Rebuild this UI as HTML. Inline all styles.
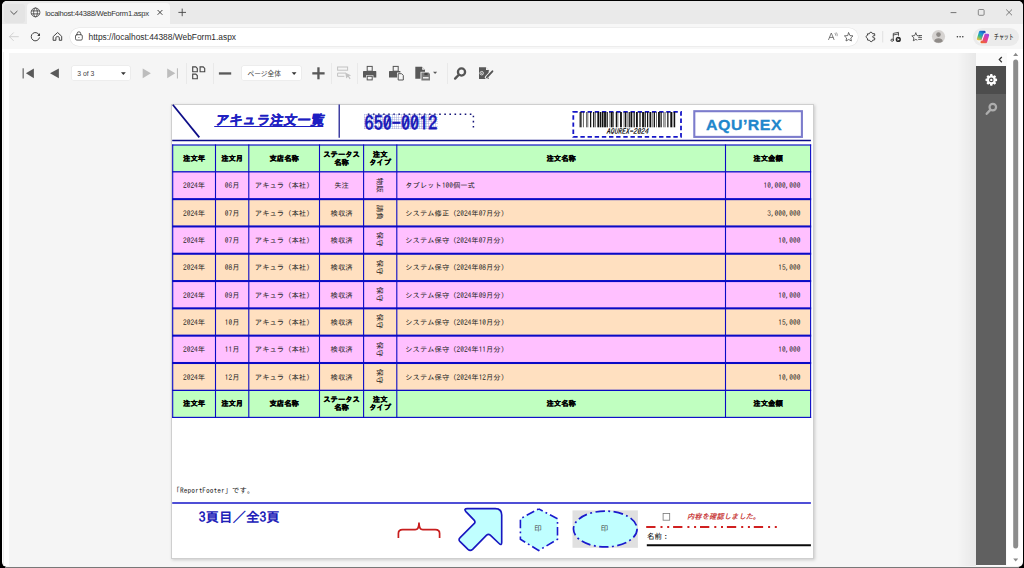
<!DOCTYPE html>
<html lang="ja"><head><meta charset="utf-8"><title>localhost:44388/WebForm1.aspx</title>
<style>
*{box-sizing:border-box}
html,body{margin:0;padding:0}
body{width:1024px;height:568px;overflow:hidden;background:#000;position:relative;font-family:"Liberation Sans","Noto Sans CJK JP",sans-serif;color:#222}
#win{position:absolute;left:2px;top:1px;width:1020.6px;height:566px;border-radius:5px;overflow:hidden;background:#fff}
#c{position:absolute;left:-2px;top:-1px;width:1024px;height:568px}
.a{position:absolute}
svg{position:absolute;overflow:visible}
#tabbar{left:0;top:0;width:1024px;height:24.4px;background:#eaeaea}
#tab{left:26.5px;top:3.3px;width:143.8px;height:21.4px;background:#f7f7f7;border-radius:4px 4px 0 0}
#tbar{left:0;top:24.4px;width:1024px;height:24.9px;background:#f7f7f7}
#addr{left:69.6px;top:27.5px;width:788.2px;height:18.4px;background:#fff;border-radius:9px;box-shadow:0 0 0 .5px #e4e4e4}
.t{white-space:nowrap;line-height:1}
#viewer{left:9px;top:53px;width:998.3px;height:512.5px;background:#f5f5f5}
.sel{background:#fff;border-radius:1.5px;box-shadow:0 0 0 .6px #e6e6e6;height:14px;top:65.8px}
.sep{width:1px;background:#e9e9e9;top:63px;height:21px}
#page{left:170.6px;top:103.9px;width:643px;height:455.2px;background:#fff;border:1px solid #cfcfcf;box-shadow:1px 1px 3px rgba(0,0,0,.18)}
.rp{font-family:"IPAGothic","Noto Sans CJK JP",monospace}
.cell{position:absolute;display:flex;align-items:center;justify-content:center;font-size:7.35px;line-height:7.4px;white-space:nowrap;color:#222}
.hc{font-weight:bold;color:#000;text-align:center;-webkit-text-stroke:.2px #000;line-height:8.1px}
.dc>span:not(.vt){position:relative;top:.7px}
.hc>span{position:relative;top:.5px}
.dc.l1{justify-content:flex-start;padding-left:6px}
.dc.l2{justify-content:flex-start;padding-left:8.4px}
.dc.r{justify-content:flex-end;padding-right:10.3px}
.vt{display:inline-block;transform:translate(-.9px,-.4px) rotate(90deg);font-size:7.6px;color:#1a1a1a}
</style></head>
<body>
<div id="win"><div id="c">

<!-- ======= browser tab strip ======= -->
<div id="tabbar" class="a"></div>
<div class="a" style="left:3.5px;top:4px;width:21px;height:18.5px;background:#e4e4e4;border-radius:3px"></div>
<svg style="left:0;top:0" width="1024" height="50" viewBox="0 0 1024 50">
  <path d="M10.4 11 L13.9 14.4 L17.4 11" fill="none" stroke="#444" stroke-width="0.9"/>
</svg>
<div id="tab" class="a"></div>
<svg style="left:0;top:0" width="1024" height="50" viewBox="0 0 1024 50" fill="none" stroke="#3a3a3a" stroke-width="0.8">
  <circle cx="35.5" cy="12.4" r="4.4"/>
  <ellipse cx="35.5" cy="12.4" rx="1.9" ry="4.4"/>
  <path d="M31.4 10.9H39.6M31.4 13.9H39.6"/>
  <path d="M157.6 10 L162.4 14.8M162.4 10 L157.6 14.8" stroke="#333" stroke-width="0.9"/>
  <path d="M178.4 12.4H186M182.2 8.6V16.2" stroke="#444" stroke-width="0.9"/>
  <!-- window controls -->
  <path d="M950.6 12.6H956.4" stroke="#555" stroke-width="0.8"/>
  <rect x="978.3" y="9.5" width="5.8" height="5.8" rx="1" stroke="#666" stroke-width="0.75"/>
  <path d="M1006.2 9.5L1012 15.3M1012 9.5L1006.2 15.3" stroke="#555" stroke-width="0.75"/>
</svg>
<div class="a t" id="tabtitle" style="left:45.2px;top:9.6px;font-size:7.6px;letter-spacing:-.25px;color:#333">localhost:44388/WebForm1.aspx</div>

<!-- ======= browser toolbar ======= -->
<div id="tbar" class="a"></div>
<div id="addr" class="a"></div>
<svg style="left:0;top:0" width="1024" height="50" viewBox="0 0 1024 50" fill="none" stroke="#444" stroke-width="0.85" stroke-linecap="round" stroke-linejoin="round">
  <!-- back (disabled) -->
  <path d="M9.6 36.7H18.4M13.4 32.8L9.5 36.7L13.4 40.6" stroke="#cdcdcd" stroke-width=".9"/>
  <!-- refresh -->
  <path d="M39.5 35.6A4.2 4.2 0 1 0 39.5 37.8" stroke="#3c3c3c" stroke-width=".95"/><path d="M40 33.1V35.9H37.2Z" fill="#3c3c3c" stroke="none"/>
  <!-- home -->
  <path d="M53.5 36.3L57.6 32.5L61.7 36.3V40.3H59.3V37.7Q59.3 36.6 57.6 36.6Q55.9 36.6 55.9 37.7V40.3H53.5Z" stroke="#3c3c3c" stroke-width=".95"/>
  <!-- lock -->
  <rect x="75.5" y="34.7" width="6.8" height="5.4" rx="1.3" stroke="#444" stroke-width=".85"/><path d="M77.1 34.7V33.6A1.8 1.8 0 0 1 80.7 33.6V34.7" stroke="#444" stroke-width=".85"/><rect x="78.4" y="37" width="1" height=".8" fill="#444" stroke="none"/>
  <!-- read aloud A -->
  <path d="M828.6 39.6L831.3 33L834 39.6M829.5 37.4H833.1" stroke="#666"/><path d="M835 33.2q1 .6 .6 2M836.4 32.6q1.4 1.2 .8 3.2" stroke="#666" stroke-width=".6"/>
  <!-- star -->
  <path d="M848.7 32.8L850 35.6L853 35.9L850.8 38L851.4 41L848.7 39.5L846 41L846.6 38L844.4 35.9L847.4 35.6Z" stroke="#555"/>
  <!-- extension -->
  <path d="M867.6 33.9L869.3 33.8Q869.6 32.2 870.9 32.2Q872.2 32.2 872.5 33.7L874.6 33.7L874.8 35.6Q872.6 35.6 872.6 36.8Q872.6 38 874.8 38L874.6 39.9L872.7 40.2Q872.4 41.7 871.2 41.7Q870 41.7 869.6 40.3L867.6 40.1L867.4 38.3Q866.1 37.8 866.1 36.7Q866.1 35.6 867.4 35.2Z" stroke="#3c3c3c" stroke-width=".95"/>
  <path d="M882.7 31.5V42" stroke="#dcdcdc"/>
  <!-- music -->
  <path d="M893.3 39.8V33.4L898.5 32.3V35.4M893.3 35L898.5 33.9" stroke="#3c3c3c" stroke-width=".85"/><ellipse cx="892.2" cy="40.2" rx="1.3" ry="1.1" stroke="#3c3c3c" stroke-width=".85"/><circle cx="898.3" cy="39.4" r="2.6" fill="#2c2c2c" stroke="none"/><path d="M897.5 38.1L899.7 39.4L897.5 40.7Z" fill="#f7f7f7" stroke="none"/>
  <!-- favourites -->
  <path d="M915.8 33L917 35.6L919.8 35.9M915.8 33L914.6 35.6L911.8 35.9L913.9 37.9L913.3 40.8L915.8 39.4L917 40"/><path d="M918.6 37.4H921.6M918.6 39.4H921.6M919.4 35.5H921.6"/>
  <!-- avatar -->
  <circle cx="938.5" cy="36.6" r="6.6" fill="#d6d3d1" stroke="none"/><circle cx="938.5" cy="34.6" r="2.3" fill="#8f8b88" stroke="none"/><path d="M934.2 41.2A4.4 3.6 0 0 1 942.8 41.2A6.4 6.4 0 0 1 934.2 41.2Z" fill="#8f8b88" stroke="none"/>
  <!-- dots -->
  <g fill="#333" stroke="none"><circle cx="957.4" cy="36.7" r=".78"/><circle cx="960.1" cy="36.7" r=".78"/><circle cx="962.8" cy="36.7" r=".78"/></g>
</svg>
<div class="a t" id="url" style="left:88.6px;top:32.9px;font-size:8.4px;color:#2c2c2c">https<span>:</span>//localhost:44388/WebForm1.aspx</div>
<div class="a" style="left:973px;top:28px;width:46.4px;height:17.6px;border-radius:9px;background:#ebebeb"></div>
<svg style="left:976px;top:29.8px" width="14" height="14" viewBox="0 0 14 14">
  <defs><linearGradient id="cg1" x1=".7" y1="0" x2=".2" y2="1"><stop offset="0" stop-color="#1b4fb6"/><stop offset=".3" stop-color="#1f8fdc"/><stop offset=".62" stop-color="#35ba88"/><stop offset="1" stop-color="#f2c13a"/></linearGradient>
  <linearGradient id="cg2" x1=".8" y1="0" x2=".2" y2="1"><stop offset="0" stop-color="#9a48e0"/><stop offset=".45" stop-color="#e23aa0"/><stop offset="1" stop-color="#ee6a26"/></linearGradient></defs>
  <circle cx="7" cy="7" r="6.9" fill="#fff" opacity=".55"/>
  <path d="M4.3 .8H8.6Q10 .8 9.5 2.3L7 9.2Q6.6 10.2 5.4 10.2H2Q.5 10.2 .9 8.6L2.9 2Q3.3 .8 4.3 .8Z" fill="url(#cg1)"/>
  <path d="M9.8 13.2H5.5Q4.1 13.2 4.6 11.7L7.1 4.8Q7.5 3.8 8.7 3.8H12Q13.5 3.8 13.1 5.4L11.2 12Q10.8 13.2 9.8 13.2Z" fill="url(#cg2)"/>
  <path d="M8.3 3.6L5.9 10.4" stroke="#fff" stroke-width="1.1" stroke-linecap="round" fill="none"/>
</svg>
<div class="a t" id="chat" style="left:994.1px;top:33px;font-size:7.3px;color:#222;-webkit-text-stroke:.1px #222;transform-origin:0 50%;transform:scaleX(.68)">チャット</div>

<!-- ======= page content ======= -->
<div id="viewer" class="a"></div>

<div class="a" style="left:3.2px;top:52px;width:.9px;height:514px;background:#efefef"></div>
<!-- viewer toolbar -->
<svg style="left:0;top:0" width="1024" height="100" viewBox="0 0 1024 100" fill="#595959">
  <rect x="22.6" y="68.3" width="1.1" height="10.2"/><path d="M33.9 68.5V78.2L25.9 73.35Z"/>
  <path d="M58.9 68.5V78.2L50 73.35Z"/>
  <g fill="#bdbdbd"><path d="M142.7 68.5V78.2L150.9 73.35Z"/><path d="M167.2 68.5V78.2L175.3 73.35Z"/><rect x="176.9" y="68.3" width="1.1" height="10.2"/></g>
  <g fill="none" stroke="#484848" stroke-width="1.15">
    <path d="M192.7 66.9H195.8L197.3 68.4V71.7H192.7Z"/><path d="M200.1 66.9H203.2L204.7 68.4V71.7H200.1Z"/><path d="M192.7 74.1H195.8L197.3 75.6V78.7H192.7Z"/>
  </g>
  <rect x="218.9" y="72.3" width="12.3" height="2.3"/>
  <rect x="312.3" y="72.2" width="12.3" height="2.3"/><rect x="317.3" y="67.3" width="2.3" height="12"/>
  <!-- select icon (disabled) -->
  <g fill="none" stroke="#c2c2c2" stroke-width="1"><rect x="337.6" y="67" width="10" height="3.2"/><path d="M345.6 73.1H337.6V76.3H344.4"/></g>
  <path d="M345.2 72.6L351.2 75.4L348.9 76.1L350.6 78.6L349.6 79.2L348 76.8L346.2 78.4Z" fill="#c2c2c2"/>
  <!-- printer -->
  <g>
   <rect x="367.2" y="66.4" width="5" height="4.8" fill="none" stroke="#555" stroke-width="1"/>
   <path d="M363 71.6Q363 71 363.8 71H375.6Q376.3 71 376.3 71.6V77.6H373.4V75.2H366V77.6H363Z"/>
   <rect x="367.2" y="76.3" width="5" height="3.6" fill="none" stroke="#555" stroke-width="1"/>
  </g>
  <!-- print 2 -->
  <g>
   <rect x="393.2" y="66.4" width="5" height="4.8" fill="none" stroke="#555" stroke-width="1"/>
   <path d="M389 71.6Q389 71 389.8 71H400.4V72.6H397V77.6H389Z"/>
   <path d="M398.2 73.7H401.6L403.3 75.4V80H398.2Z" fill="none" stroke="#555" stroke-width="1"/>
  </g>
  <!-- export -->
  <g>
   <path d="M415.3 66.8H422L425 69.8V78.8H415.3Z"/>
   <path d="M422.2 66.9V69.7H425Z" fill="#f5f5f5"/>
   <rect x="420.5" y="71.8" width="10.2" height="9.6" fill="#f5f5f5"/>
   <path d="M421.4 72.6H428.6L430 74V80.6H421.4Z" fill="#7a7a7a"/>
   <rect x="424.4" y="72.9" width="3.2" height="2.3" fill="#444"/>
   <rect x="423" y="77.1" width="5.6" height="1.4" fill="#f5f5f5"/>
   <path d="M433 71.8H437.2L435.1 73.9Z"/>
  </g>
  <!-- search -->
  <g fill="none" stroke="#555"><circle cx="461.5" cy="72" r="3.6" stroke-width="2.3"/><path d="M458.6 75L455.1 78.6" stroke-width="2.4" stroke-linecap="round"/></g>
  <!-- last -->
  <g>
   <path d="M479 67.3H485.8L488.7 70.2V79H479Z"/>
   <path d="M486 67.4V70.1H488.7Z" fill="#f5f5f5"/>
   <circle cx="481.7" cy="73.2" r="1.75" fill="none" stroke="#f5f5f5" stroke-width=".8"/>
   <path d="M481.2 72.4L482.6 73.2L481.2 74Z" fill="#f5f5f5"/>
   <path d="M492.6 70.8L486.4 77.4" stroke="#f5f5f5" stroke-width="3.3" fill="none" stroke-linecap="round"/>
   <path d="M492.4 71.3L487.5 76.5" stroke="#555" stroke-width="1.9" fill="none" stroke-linecap="round"/>
   <path d="M486.3 76.3L487.8 77.7L485.7 78.5Z"/>
  </g>
  <!-- dropdown arrows -->
  <path d="M121 72.2H125.8L123.4 74.9Z" fill="#333"/><path d="M291.7 72.2H296.5L294.1 74.9Z" fill="#333"/>
</svg>
<div class="a sel" style="left:71.8px;width:58.2px"></div>
<div class="a sel" style="left:241.7px;width:59.4px"></div>
<div class="a sep" style="left:186.3px"></div><div class="a sep" style="left:212.8px"></div><div class="a sep" style="left:331.2px"></div><div class="a sep" style="left:356.5px"></div><div class="a sep" style="left:447.2px"></div>
<div class="a t" id="pg" style="left:77.3px;top:70.9px;font-size:6.8px;color:#444">3 of 3</div>
<div class="a t" id="zm" style="left:247.6px;top:70.6px;font-size:6.7px;color:#444">ページ全体</div>
<svg style="left:0;top:0" width="1024" height="100" viewBox="0 0 1024 100"><path d="M121 72.2H125.8L123.4 74.9Z" fill="#333"/><path d="M291.7 72.2H296.5L294.1 74.9Z" fill="#333"/></svg>

<!-- side panel -->
<div class="a" style="left:957px;top:53px;width:19px;height:512.5px;background:linear-gradient(90deg,rgba(0,0,0,0),rgba(0,0,0,.055))"></div>
<div class="a" style="left:975.6px;top:53px;width:31.7px;height:512.5px;background:#fafafa"></div>
<div class="a" style="left:976.3px;top:65.9px;width:30.2px;height:499.6px;background:#606060"></div>
<div class="a" style="left:976.3px;top:65.9px;width:30.2px;height:27.9px;background:#4d4d4d"></div>
<svg style="left:0;top:0" width="1024" height="568" viewBox="0 0 1024 568">
  <path d="M1001.8 57L999.3 59.6L1001.8 62.2" fill="none" stroke="#333" stroke-width="1.25"/>
  <!-- gear -->
  <g transform="translate(991.3 79.9)">
    <g fill="#fff"><circle r="4.4"/>
    <g id="teeth"><rect x="-1.3" y="-5.8" width="2.6" height="11.6" rx=".8"/><rect x="-1.3" y="-5.8" width="2.6" height="11.6" rx=".8" transform="rotate(45)"/><rect x="-1.3" y="-5.8" width="2.6" height="11.6" rx=".8" transform="rotate(90)"/><rect x="-1.3" y="-5.8" width="2.6" height="11.6" rx=".8" transform="rotate(135)"/></g></g>
    <circle r="1.75" fill="none" stroke="#4d4d4d" stroke-width="1.15"/>
  </g>
  <g fill="none" stroke="#adadad"><circle cx="992.8" cy="107.1" r="3.3" stroke-width="2.2"/><path d="M990.3 109.9L986.7 113.8" stroke-width="2.4" stroke-linecap="round"/></g>
  <!-- scrollbar -->
  <path d="M1013.2 56L1015.7 52.8L1018.2 56Z" fill="#8a8a8a"/>
  <rect x="1013.2" y="59.4" width="5" height="489.2" rx="2.5" fill="#8c8c8c"/>
  <path d="M1013.2 558.4L1015.7 561.6L1018.2 558.4Z" fill="#8a8a8a"/>
</svg>

<!-- ======= report page ======= -->
<div id="page" class="a"></div>
<div class="rp">
<svg style="left:0;top:0" width="1024" height="568" viewBox="0 0 1024 568">
  <path d="M172.8 104.8L199.3 137.4" stroke="#0e0e88" stroke-width="1.75" fill="none"/>
  <path d="M339.2 104.6V137.8" stroke="#10108c" stroke-width="1.2" fill="none"/>
  <path d="M172.2 140.5H810.9" stroke="#0c0c88" stroke-width="1.35" fill="none"/>
  <path d="M172.2 503H810.9" stroke="#1414c8" stroke-width="1.6" fill="none"/>
  <!-- dotted box postal -->
  <path d="M367.8 114.2H473.4V129.4" stroke="#141478" stroke-width="1.5" stroke-dasharray="1.6 3.5" fill="none"/>
  <!-- barcode -->
  <rect x="573.3" y="111.9" width="107.7" height="24.9" fill="none" stroke="#1616c8" stroke-width="1.8" stroke-dasharray="4.4 2.75"/>
  <g fill="#111"><rect x="579.60" y="112" width="1.23" height="15.3"/><rect x="581.44" y="112" width="0.61" height="15.3"/><rect x="583.28" y="112" width="0.61" height="15.3"/><rect x="586.34" y="112" width="0.61" height="15.3"/><rect x="587.57" y="112" width="0.61" height="15.3"/><rect x="590.02" y="112" width="1.23" height="15.3"/><rect x="593.08" y="112" width="1.23" height="15.3"/><rect x="594.92" y="112" width="0.61" height="15.3"/><rect x="597.37" y="112" width="1.84" height="15.3"/><rect x="599.82" y="112" width="1.23" height="15.3"/><rect x="601.66" y="112" width="1.84" height="15.3"/><rect x="604.11" y="112" width="1.84" height="15.3"/><rect x="606.56" y="112" width="1.23" height="15.3"/><rect x="609.63" y="112" width="0.61" height="15.3"/><rect x="610.85" y="112" width="1.84" height="15.3"/><rect x="613.31" y="112" width="0.61" height="15.3"/><rect x="615.76" y="112" width="1.23" height="15.3"/><rect x="617.59" y="112" width="0.61" height="15.3"/><rect x="620.05" y="112" width="1.84" height="15.3"/><rect x="623.72" y="112" width="0.61" height="15.3"/><rect x="624.95" y="112" width="1.23" height="15.3"/><rect x="626.79" y="112" width="0.61" height="15.3"/><rect x="628.63" y="112" width="1.23" height="15.3"/><rect x="630.46" y="112" width="1.84" height="15.3"/><rect x="633.53" y="112" width="1.23" height="15.3"/><rect x="635.98" y="112" width="1.84" height="15.3"/><rect x="639.04" y="112" width="0.61" height="15.3"/><rect x="640.27" y="112" width="0.61" height="15.3"/><rect x="642.11" y="112" width="1.84" height="15.3"/><rect x="644.56" y="112" width="1.23" height="15.3"/><rect x="647.01" y="112" width="1.23" height="15.3"/><rect x="649.46" y="112" width="1.84" height="15.3"/><rect x="652.53" y="112" width="0.61" height="15.3"/><rect x="653.75" y="112" width="1.23" height="15.3"/><rect x="656.20" y="112" width="0.61" height="15.3"/><rect x="658.04" y="112" width="1.84" height="15.3"/><rect x="660.49" y="112" width="1.23" height="15.3"/><rect x="663.56" y="112" width="0.61" height="15.3"/><rect x="664.78" y="112" width="0.61" height="15.3"/><rect x="667.23" y="112" width="1.23" height="15.3"/><rect x="670.30" y="112" width="1.84" height="15.3"/><rect x="672.75" y="112" width="0.61" height="15.3"/><rect x="673.97" y="112" width="1.23" height="15.3"/></g>
  <!-- logo -->
  <rect x="694.3" y="111.2" width="107.6" height="25.7" fill="#fff" stroke="#7c7ccc" stroke-width="2.1"/>
</svg>
<div class="a t" id="title" style="left:213.9px;top:113.9px;font-size:13.65px;font-weight:bold;color:#1e1ec2;-webkit-text-stroke:.25px #1e1ec2;text-decoration:underline;text-underline-offset:1.3px;text-decoration-thickness:1px;transform-origin:0 100%;transform:skewX(-11deg)">アキュラ注文一覧</div>
<div class="a t" id="zip" style="left:364.4px;top:113.6px;width:73.4px;height:15.3px;background:repeating-linear-gradient(90deg,rgba(110,120,200,.3) 0 1px,rgba(255,255,255,0) 1px 2.3px),repeating-linear-gradient(0deg,rgba(110,120,200,.28) 0 1px,rgba(255,255,255,0) 1px 2.3px)"><span id="zipt" style="position:absolute;left:0.2px;top:-0.1px;display:block;font-family:'IPAGothic','Liberation Mono',monospace;font-size:18.2px;font-weight:normal;color:#1818b8;-webkit-text-stroke:.7px #1818b8;line-height:16px;height:16px;transform-origin:0 0;transform:scale(1,1.05)">650-0012</span></div>
<div class="a t" id="bct" style="left:606.3px;top:128.4px;font-size:7.6px;font-style:italic;color:#000;-webkit-text-stroke:.12px #000">AQUREX-2024</div>
<div class="a t" id="logo" style="left:706.2px;top:116.5px;font-family:'Liberation Sans',sans-serif;font-weight:bold;font-size:15.3px;color:#2086cc;letter-spacing:.5px;-webkit-text-stroke:.3px #2086cc;transform-origin:0 50%;transform:scaleX(1.04)">AQU’REX</div>

<svg style="left:0;top:0" width="1024" height="568" viewBox="0 0 1024 568"><rect x="172.7" y="145.0" width="637.9" height="26.80" fill="#c0ffc0"/><rect x="172.7" y="171.8" width="637.9" height="27.35" fill="#ffc0ff"/><rect x="172.7" y="199.15" width="637.9" height="27.30" fill="#ffe0c0"/><rect x="172.7" y="226.45" width="637.9" height="27.30" fill="#ffc0ff"/><rect x="172.7" y="253.75" width="637.9" height="27.30" fill="#ffe0c0"/><rect x="172.7" y="281.05" width="637.9" height="27.30" fill="#ffc0ff"/><rect x="172.7" y="308.35" width="637.9" height="27.30" fill="#ffe0c0"/><rect x="172.7" y="335.65" width="637.9" height="27.35" fill="#ffc0ff"/><rect x="172.7" y="363.0" width="637.9" height="27.35" fill="#ffe0c0"/><rect x="172.7" y="390.35" width="637.9" height="27.05" fill="#c0ffc0"/><rect x="172.15" y="144.43" width="639.00" height="1.15" fill="#0a0ac6"/><rect x="172.15" y="171.15" width="639.00" height="1.3" fill="#0a0ac6"/><rect x="172.15" y="198.12" width="639.00" height="2.05" fill="#0a0ac6"/><rect x="172.15" y="225.42" width="639.00" height="2.05" fill="#0a0ac6"/><rect x="172.15" y="252.72" width="639.00" height="2.05" fill="#0a0ac6"/><rect x="172.15" y="280.03" width="639.00" height="2.05" fill="#0a0ac6"/><rect x="172.15" y="307.33" width="639.00" height="2.05" fill="#0a0ac6"/><rect x="172.15" y="334.62" width="639.00" height="2.05" fill="#0a0ac6"/><rect x="172.15" y="361.98" width="639.00" height="2.05" fill="#0a0ac6"/><rect x="172.15" y="389.70" width="639.00" height="1.3" fill="#0a0ac6"/><rect x="172.15" y="416.82" width="639.00" height="1.15" fill="#0a0ac6"/><rect x="172.15" y="144.45" width="1.1" height="273.50" fill="#0a0ac6"/><rect x="214.95" y="144.45" width="1.1" height="273.50" fill="#0a0ac6"/><rect x="248.25" y="144.45" width="1.1" height="273.50" fill="#0a0ac6"/><rect x="318.95" y="144.45" width="1.1" height="273.50" fill="#0a0ac6"/><rect x="363.05" y="144.45" width="1.1" height="273.50" fill="#0a0ac6"/><rect x="396.25" y="144.45" width="1.1" height="273.50" fill="#0a0ac6"/><rect x="724.95" y="144.45" width="1.1" height="273.50" fill="#0a0ac6"/><rect x="810.05" y="144.45" width="1.1" height="273.50" fill="#0a0ac6"/></svg><div class="cell hc" style="left:172.7px;top:145.00px;width:42.8px;height:26.80px"><span>注文年</span></div><div class="cell hc" style="left:215.5px;top:145.00px;width:33.3px;height:26.80px"><span>注文月</span></div><div class="cell hc" style="left:248.8px;top:145.00px;width:70.7px;height:26.80px"><span>支店名称</span></div><div class="cell hc" style="left:319.5px;top:145.00px;width:44.1px;height:26.80px"><span>ステータス<br>名称</span></div><div class="cell hc" style="left:363.6px;top:145.00px;width:33.2px;height:26.80px"><span>注文<br>タイプ</span></div><div class="cell hc" style="left:396.8px;top:145.00px;width:328.7px;height:26.80px"><span>注文名称</span></div><div class="cell hc" style="left:725.5px;top:145.00px;width:85.1px;height:26.80px"><span>注文金額</span></div><div class="cell hc" style="left:172.7px;top:390.35px;width:42.8px;height:27.05px"><span>注文年</span></div><div class="cell hc" style="left:215.5px;top:390.35px;width:33.3px;height:27.05px"><span>注文月</span></div><div class="cell hc" style="left:248.8px;top:390.35px;width:70.7px;height:27.05px"><span>支店名称</span></div><div class="cell hc" style="left:319.5px;top:390.35px;width:44.1px;height:27.05px"><span>ステータス<br>名称</span></div><div class="cell hc" style="left:363.6px;top:390.35px;width:33.2px;height:27.05px"><span>注文<br>タイプ</span></div><div class="cell hc" style="left:396.8px;top:390.35px;width:328.7px;height:27.05px"><span>注文名称</span></div><div class="cell hc" style="left:725.5px;top:390.35px;width:85.1px;height:27.05px"><span>注文金額</span></div><div class="cell dc c" style="left:172.7px;top:171.80px;width:42.8px;height:27.35px"><span>2024年</span></div><div class="cell dc c" style="left:215.5px;top:171.80px;width:33.3px;height:27.35px"><span>06月</span></div><div class="cell dc l1" style="left:248.8px;top:171.80px;width:70.7px;height:27.35px"><span>アキュラ（本社）</span></div><div class="cell dc c" style="left:319.5px;top:171.80px;width:44.1px;height:27.35px"><span>失注</span></div><div class="cell dc v" style="left:363.6px;top:171.80px;width:33.2px;height:27.35px"><span class="vt">物販</span></div><div class="cell dc l2" style="left:396.8px;top:171.80px;width:328.7px;height:27.35px"><span>タブレット100個一式</span></div><div class="cell dc r" style="left:725.5px;top:171.80px;width:85.1px;height:27.35px"><span>10,000,000</span></div>
<div class="cell dc c" style="left:172.7px;top:199.15px;width:42.8px;height:27.30px"><span>2024年</span></div><div class="cell dc c" style="left:215.5px;top:199.15px;width:33.3px;height:27.30px"><span>07月</span></div><div class="cell dc l1" style="left:248.8px;top:199.15px;width:70.7px;height:27.30px"><span>アキュラ（本社）</span></div><div class="cell dc c" style="left:319.5px;top:199.15px;width:44.1px;height:27.30px"><span>検収済</span></div><div class="cell dc v" style="left:363.6px;top:199.15px;width:33.2px;height:27.30px"><span class="vt">請負</span></div><div class="cell dc l2" style="left:396.8px;top:199.15px;width:328.7px;height:27.30px"><span>システム修正（2024年07月分）</span></div><div class="cell dc r" style="left:725.5px;top:199.15px;width:85.1px;height:27.30px"><span>3,000,000</span></div>
<div class="cell dc c" style="left:172.7px;top:226.45px;width:42.8px;height:27.30px"><span>2024年</span></div><div class="cell dc c" style="left:215.5px;top:226.45px;width:33.3px;height:27.30px"><span>07月</span></div><div class="cell dc l1" style="left:248.8px;top:226.45px;width:70.7px;height:27.30px"><span>アキュラ（本社）</span></div><div class="cell dc c" style="left:319.5px;top:226.45px;width:44.1px;height:27.30px"><span>検収済</span></div><div class="cell dc v" style="left:363.6px;top:226.45px;width:33.2px;height:27.30px"><span class="vt">保守</span></div><div class="cell dc l2" style="left:396.8px;top:226.45px;width:328.7px;height:27.30px"><span>システム保守（2024年07月分）</span></div><div class="cell dc r" style="left:725.5px;top:226.45px;width:85.1px;height:27.30px"><span>10,000</span></div>
<div class="cell dc c" style="left:172.7px;top:253.75px;width:42.8px;height:27.30px"><span>2024年</span></div><div class="cell dc c" style="left:215.5px;top:253.75px;width:33.3px;height:27.30px"><span>08月</span></div><div class="cell dc l1" style="left:248.8px;top:253.75px;width:70.7px;height:27.30px"><span>アキュラ（本社）</span></div><div class="cell dc c" style="left:319.5px;top:253.75px;width:44.1px;height:27.30px"><span>検収済</span></div><div class="cell dc v" style="left:363.6px;top:253.75px;width:33.2px;height:27.30px"><span class="vt">保守</span></div><div class="cell dc l2" style="left:396.8px;top:253.75px;width:328.7px;height:27.30px"><span>システム保守（2024年08月分）</span></div><div class="cell dc r" style="left:725.5px;top:253.75px;width:85.1px;height:27.30px"><span>15,000</span></div>
<div class="cell dc c" style="left:172.7px;top:281.05px;width:42.8px;height:27.30px"><span>2024年</span></div><div class="cell dc c" style="left:215.5px;top:281.05px;width:33.3px;height:27.30px"><span>09月</span></div><div class="cell dc l1" style="left:248.8px;top:281.05px;width:70.7px;height:27.30px"><span>アキュラ（本社）</span></div><div class="cell dc c" style="left:319.5px;top:281.05px;width:44.1px;height:27.30px"><span>検収済</span></div><div class="cell dc v" style="left:363.6px;top:281.05px;width:33.2px;height:27.30px"><span class="vt">保守</span></div><div class="cell dc l2" style="left:396.8px;top:281.05px;width:328.7px;height:27.30px"><span>システム保守（2024年09月分）</span></div><div class="cell dc r" style="left:725.5px;top:281.05px;width:85.1px;height:27.30px"><span>10,000</span></div>
<div class="cell dc c" style="left:172.7px;top:308.35px;width:42.8px;height:27.30px"><span>2024年</span></div><div class="cell dc c" style="left:215.5px;top:308.35px;width:33.3px;height:27.30px"><span>10月</span></div><div class="cell dc l1" style="left:248.8px;top:308.35px;width:70.7px;height:27.30px"><span>アキュラ（本社）</span></div><div class="cell dc c" style="left:319.5px;top:308.35px;width:44.1px;height:27.30px"><span>検収済</span></div><div class="cell dc v" style="left:363.6px;top:308.35px;width:33.2px;height:27.30px"><span class="vt">保守</span></div><div class="cell dc l2" style="left:396.8px;top:308.35px;width:328.7px;height:27.30px"><span>システム保守（2024年10月分）</span></div><div class="cell dc r" style="left:725.5px;top:308.35px;width:85.1px;height:27.30px"><span>15,000</span></div>
<div class="cell dc c" style="left:172.7px;top:335.65px;width:42.8px;height:27.35px"><span>2024年</span></div><div class="cell dc c" style="left:215.5px;top:335.65px;width:33.3px;height:27.35px"><span>11月</span></div><div class="cell dc l1" style="left:248.8px;top:335.65px;width:70.7px;height:27.35px"><span>アキュラ（本社）</span></div><div class="cell dc c" style="left:319.5px;top:335.65px;width:44.1px;height:27.35px"><span>検収済</span></div><div class="cell dc v" style="left:363.6px;top:335.65px;width:33.2px;height:27.35px"><span class="vt">保守</span></div><div class="cell dc l2" style="left:396.8px;top:335.65px;width:328.7px;height:27.35px"><span>システム保守（2024年11月分）</span></div><div class="cell dc r" style="left:725.5px;top:335.65px;width:85.1px;height:27.35px"><span>10,000</span></div>
<div class="cell dc c" style="left:172.7px;top:363.00px;width:42.8px;height:27.35px"><span>2024年</span></div><div class="cell dc c" style="left:215.5px;top:363.00px;width:33.3px;height:27.35px"><span>12月</span></div><div class="cell dc l1" style="left:248.8px;top:363.00px;width:70.7px;height:27.35px"><span>アキュラ（本社）</span></div><div class="cell dc c" style="left:319.5px;top:363.00px;width:44.1px;height:27.35px"><span>検収済</span></div><div class="cell dc v" style="left:363.6px;top:363.00px;width:33.2px;height:27.35px"><span class="vt">保守</span></div><div class="cell dc l2" style="left:396.8px;top:363.00px;width:328.7px;height:27.35px"><span>システム保守（2024年12月分）</span></div><div class="cell dc r" style="left:725.5px;top:363.00px;width:85.1px;height:27.35px"><span>10,000</span></div>


<div class="a t" id="rf" style="left:172.6px;top:486.7px;font-size:7.45px;color:#1a1a1a">「ReportFooter」です。</div>
<div class="a t" id="pn" style="left:198.7px;top:510.6px;font-size:13.5px;font-weight:bold;color:#2020b8">3頁目／全3頁</div>

<svg style="left:0;top:0" width="1024" height="568" viewBox="0 0 1024 568">
  <!-- brace -->
  <path d="M398.4 538V533.4Q398.4 529.6 402.6 529.6H415.2Q419 529.6 419 522.4Q419 529.6 422.8 529.6H435.4Q439.6 529.6 439.6 533.4V538" fill="none" stroke="#c81e1e" stroke-width="1.7"/>
  <!-- arrow -->
  <path d="M467.4 508.6H495.2Q501.7 508.6 501.7 515.1V542.4Q501.7 545.9 499.1 543.5L490.3 535.2Q488.4 533.5 486.6 535.2L472.6 549.4Q470.3 551.5 468 549.4L460.1 541.7Q458 539.7 460.1 537.7L474.1 523.7Q475.8 521.9 474.1 520.1L465.9 511.6Q463.4 508.6 467.4 508.6Z" fill="#c0ffff" stroke="#1818c0" stroke-width="1.65" stroke-linejoin="round"/>
  <!-- hexagon -->
  <path d="M538.7 508.9L557.5 518.7V539.3L538.7 550.5L520.4 539.3V518.7Z" fill="#c0ffff" stroke="#1a1acc" stroke-width="1.6" stroke-dasharray="8.5 3.2 1.8 3.2" stroke-dashoffset="4"/>
  <!-- ellipse -->
  <rect x="572.5" y="510.4" width="65.4" height="37.4" fill="#e0e0e0"/>
  <ellipse cx="605.3" cy="529" rx="31.8" ry="17.9" fill="#c0ffff" stroke="#1a1acc" stroke-width="1.7" stroke-dasharray="9.5 3.4 1.9 3.4"/>
  <!-- checkbox -->
  <rect x="663.1" y="513.6" width="6.6" height="6.6" fill="#fff" stroke="#777" stroke-width=".8"/>
  <!-- red dash-dot-dot -->
  <path d="M646.2 527H778.4" stroke="#d02020" stroke-width="1.85" stroke-dasharray="9.3 5 2 4.7 2 3.9" fill="none"/>
  <path d="M646.8 545.2H810.9" stroke="#0a0a0a" stroke-width="1.9" fill="none"/>
</svg>
<div class="a t" style="left:534.3px;top:525.4px;font-size:7.6px;color:#4a4a4a">印</div>
<div class="a t" style="left:600.7px;top:525.4px;font-size:7.6px;color:#444">印</div>
<div class="a t" id="kk" style="left:687px;top:513.4px;font-size:7.35px;font-style:italic;color:#c41c1c;-webkit-text-stroke:.15px #c41c1c">内容を確認しました。</div>
<div class="a t" id="nm" style="left:647px;top:532.8px;font-size:7.45px;color:#111;-webkit-text-stroke:.1px #111">名前：</div>
</div>

</div></div>
<!-- bottom edge shading -->
<div class="a" style="left:6px;top:566px;width:1012px;height:1px;background:#f4f4f4"></div>
<div class="a" style="left:5px;top:567px;width:1014px;height:1px;background:#787878"></div>
</body></html>
